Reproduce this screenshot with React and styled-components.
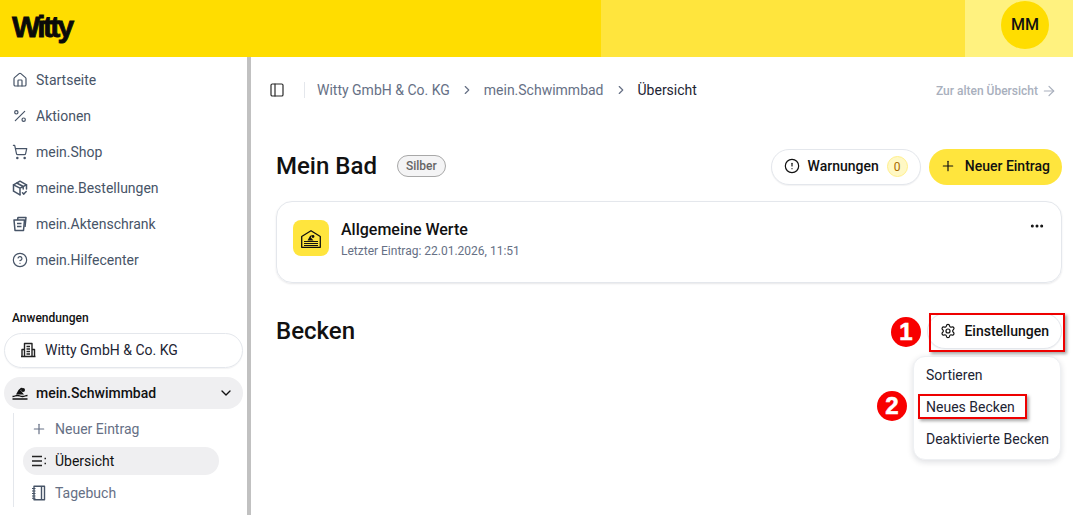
import React from "react";
import styled, { createGlobalStyle } from "styled-components";
import {
  House, Percent, ShoppingCart, CircleHelp, Plus, PanelLeft, ChevronRight, ChevronDown,
  ArrowRight, CircleAlert, Settings, Ellipsis,
} from "lucide-react";

const GlobalStyle = createGlobalStyle`
html, body { margin: 0; padding: 0; height: 515px; overflow: hidden; background: #fff; }
body { font-family: Roboto, "Liberation Sans", sans-serif; color: #111; }
* { box-sizing: border-box; }
`;

const Page = styled.div`
display: grid;
grid-template-rows: 57px 458px;
width: 1073px;
height: 515px;
overflow: hidden;
`;

const Header = styled.header`
display: grid;
grid-template-columns: 601px 364px 108px;
`;

const HeaderPart = styled.div`
background: ${(p) => p.$bg};
display: flex;
align-items: flex-start;
padding: ${(p) => p.$padding || 0};
`;

const Logo = styled.div`
font-family: "Liberation Sans", Arial, sans-serif;
font-weight: 700;
font-size: 30px;
line-height: 30px;
letter-spacing: -2.7px;
color: #0a0a0a;
-webkit-text-stroke: 0.8px #0a0a0a;
`;

const Avatar = styled.div`
width: 48px;
height: 48px;
padding-bottom: 1px;
border-radius: 50%;
background: #ffdd00;
display: flex;
align-items: center;
justify-content: center;
font-size: 16px;
font-weight: 500;
color: #111;
`;

const Body = styled.div`
display: grid;
grid-template-columns: 247px 4px 1fr;
min-height: 0;
`;

const Sidebar = styled.aside`
padding: 5px 4px 0;
overflow: hidden;
`;

const Scrollbar = styled.div`
background: #c1c1c1;
`;

const NavItem = styled.div`
display: flex;
align-items: center;
gap: 8px;
height: 36px;
padding-left: 8px;
font-size: 14px;
color: #475467;
svg { flex: none; }
`;

const SectionLabel = styled.div`
margin: 32px 0 7px 8px;
height: 16px;
line-height: 16px;
font-size: 12px;
font-weight: 500;
color: #111;
`;

const AppPill = styled.div`
display: flex;
align-items: center;
gap: 9px;
height: 35px;
padding: 0 0 1px 15px;
border: 1px solid #e4e7ec;
border-radius: 18px;
box-shadow: 0 1px 1px rgba(16, 24, 40, 0.05);
font-size: 14px;
color: #1d2433;
`;

const ActiveApp = styled.div`
display: flex;
align-items: center;
gap: 8px;
height: 32px;
margin-top: 9px;
padding: 0 9px 1px 8px;
border-radius: 16px;
background: #efeff1;
font-size: 14px;
font-weight: 500;
color: #111;
span { flex: 1; }
`;

const SubNav = styled.div`
margin: 4px 0 0 9px;
padding: 2px 0 0 9px;
border-left: 1px solid #e4e7ec;
`;

const SubItem = styled.div`
display: flex;
align-items: center;
gap: 8px;
height: 28px;
width: 196px;
margin-bottom: 4px;
padding: 0 0 1px 8px;
border-radius: 14px;
font-size: 14px;
color: ${(p) => (p.$active ? "#111" : "#667085")};
background: ${(p) => (p.$active ? "#efeff1" : "transparent")};
svg { flex: none; color: ${(p) => (p.$active ? "#222" : "#667085")}; }
`;

const Main = styled.main`
position: relative;
padding: 0 11px 0 25px;
`;

const TopBar = styled.div`
display: flex;
align-items: center;
height: 66px;
margin-left: -7px;
font-size: 14px;
color: #667085;
`;

const Divider = styled.div`
width: 1px;
height: 16px;
margin: 0 12px 0 19px;
background: #e4e7ec;
`;

const Crumb = styled.span`
color: ${(p) => (p.$current ? "#1d2433" : "#667085")};
`;

const CrumbSep = styled(ChevronRight)`
margin: 0 10px;
color: #667085;
`;

const OldLink = styled.div`
margin-left: auto;
margin-right: 5px;
padding-top: 1px;
display: flex;
align-items: center;
gap: 3px;
font-size: 12px;
font-weight: 500;
color: #a9b0bd;
`;

const TitleRow = styled.div`
display: flex;
align-items: center;
height: 36px;
margin-top: 26px;
`;

const Title = styled.h1`
margin: 0 0 ${(p) => p.$lift || 0}px;
font-size: 24px;
line-height: 32px;
font-weight: 500;
color: #111;
`;

const Badge = styled.span`
margin: 0 0 2px 20px;
padding: 0 8px;
height: 22px;
line-height: 20px;
border: 1px solid #a8a8a8;
border-radius: 11px;
background: #f4f4f5;
font-size: 12px;
font-weight: 500;
color: #666;
`;

const Actions = styled.div`
margin-left: auto;
display: flex;
gap: 8px;
`;

const Button = styled.div`
display: flex;
align-items: center;
height: 36px;
border-radius: 18px;
font-size: 14px;
font-weight: 500;
line-height: 16px;
color: #111;
border: ${(p) => (p.$yellow ? "none" : "1px solid #e4e7ec")};
background: ${(p) => (p.$yellow ? "#ffe53d" : "#fff")};
box-shadow: ${(p) => (p.$yellow ? "none" : "0 1px 1px rgba(16, 24, 40, 0.05)")};
gap: ${(p) => p.$gap || 8}px;
padding: ${(p) => p.$padding};
`;

const Count = styled.span`
width: 21px;
height: 21px;
margin-top: 1px;
border-radius: 50%;
background: #fff8c4;
border: 1px solid #ffef8a;
display: flex;
align-items: center;
justify-content: center;
font-size: 12px;
font-weight: 400;
color: #a86a00;
`;

const Card = styled.div`
display: flex;
height: 82px;
margin-top: 16px;
padding: 18px 16px;
border: 1px solid #e4e7ec;
border-radius: 16px;
box-shadow: 0 1px 2px rgba(16, 24, 40, 0.1);
`;

const CardIcon = styled.div`
width: 36px;
height: 36px;
padding-top: 2px;
border-radius: 8px;
background: #ffe53d;
display: flex;
align-items: center;
justify-content: center;
`;

const CardText = styled.div`
margin-left: 12px;
flex: 1;
`;

const CardTitle = styled.div`
font-size: 16px;
line-height: 20px;
font-weight: 500;
color: #111;
`;

const CardSub = styled.div`
margin-top: 3px;
font-size: 12px;
line-height: 16px;
color: #667085;
`;

const CardMenu = styled(Ellipsis)`
margin: -2px 0 0 0;
color: #111;
`;

const SectionRow = styled.div`
display: flex;
align-items: center;
justify-content: space-between;
height: 36px;
margin-top: 30px;
`;

const Dropdown = styled.div`
position: absolute;
top: 299px;
right: 12px;
width: 148px;
height: 104px;
padding: 2px 0;
border: 1px solid #eef0f3;
border-radius: 12px;
background: #fff;
box-shadow: 0 2px 6px rgba(16, 24, 40, 0.14);
`;

const DropItem = styled.div`
height: 32px;
line-height: 32px;
padding-left: 12px;
font-size: 14px;
color: #1d2433;
`;

/* red marks laid over the screenshot */
const RedBox = styled.div`
position: absolute;
top: ${(p) => p.$top}px;
left: ${(p) => p.$left}px;
width: ${(p) => p.$w}px;
height: ${(p) => p.$h}px;
border: 2.5px solid #ee0000;
box-shadow: 2px 2px 3px rgba(0, 0, 0, 0.35);
`;

const RedDot = styled.div`
position: absolute;
top: ${(p) => p.$top}px;
left: ${(p) => p.$left}px;
width: 30px;
height: 30px;
border-radius: 50%;
background: #f80000;
display: flex;
align-items: center;
justify-content: center;
font-family: "Liberation Sans", Arial, sans-serif;
font-size: 24px;
font-weight: 700;
color: #fff;
-webkit-text-stroke: 0.6px #fff;
`;

const Cabinet = () => (
  <svg width="16" height="16" viewBox="0 0 16 16" fill="none" stroke="currentColor" strokeWidth="1.5" strokeLinejoin="round">
    <path d="M2 4h10.500l-1 10.500H3z" />
    <path d="M5.500 4 6 1.500h8L13 11" />
    <path d="M5 7.500h4.500M5 10.500h4.500" />
  </svg>
);

const Parcel = () => (
  <svg width="16" height="16" viewBox="0 0 16 16" fill="none" stroke="currentColor" strokeWidth="1.5" strokeLinejoin="round" strokeLinecap="round">
    <path d="M14.500 9V4.800L8 1.200 1.500 4.800v6.400L8 14.800" />
    <path d="M1.500 4.800 8 8.200l6.500-3.400M8 8.200v6.600M4.800 3l6.400 3.500v2.500" />
    <path d="m10.500 12.800 1.300 1.300 2.400-2.600" />
  </svg>
);

const Office = () => (
  <svg width="16" height="16" viewBox="0 0 16 16" fill="none" stroke="#222" strokeWidth="1.400" strokeLinejoin="round">
    <path d="M4.500 14.500V1.500h7.500v13M2 14.500V7.500h2.500M12 7.500h2.500v7M1 14.500h14.500" />
    <path d="M6.500 4.500h3.500M6.500 7h3.500M6.500 9.500h3.500M6.500 12h3.500" />
  </svg>
);

const Swimmer = ({ size = 16 }) => (
  <svg width={size} height={size} viewBox="0 0 16 16" fill="none">
    <circle cx="11" cy="5" r="2" fill="#111" />
    <path d="M4 9.500 6.500 5 9 2.800l2 .2-2.600 2.300 3.600 4.200z" fill="#111" />
    <path d="M.5 11.500c2.500 0 2.500-1 5-1s2.500 1 5 1 2.500-1 5-1M.5 14h15" stroke="#111" strokeWidth="1.300" />
  </svg>
);

const ListMark = () => (
  <svg width="16" height="16" viewBox="0 0 16 16" fill="none" stroke="#222" strokeWidth="1.600" strokeLinecap="butt">
    <path d="M1 3.500h10M1 8h10M1 12.500h10M13.500 5.500h1.500M13.500 10.500h1.500" />
  </svg>
);

const Diary = () => (
  <svg width="16" height="16" viewBox="0 0 16 16" fill="none" stroke="#475467" strokeWidth="1.400" strokeLinejoin="round">
    <path d="M3 1.200h10.500v13.600H3zM10.500 1.200v13.600" />
    <path d="M1 3.500h3.500M1 6h3.500M1 8.500h3.500M1 11h3.500M1 13.300h3.500" strokeWidth="1.100" />
  </svg>
);

const PoolHouse = () => (
  <svg width="20" height="18" viewBox="0 0 20 18" fill="none" stroke="#111" strokeWidth="1.300" strokeLinejoin="round">
    <path d="M.7 6.500 10 .7l9.300 5.800v10.800H.7z" />
    <circle cx="12" cy="6.500" r="1.400" fill="#111" stroke="none" />
    <path d="M6.500 10.500 9 6l2-1.200-1.200 2.700 2.700 3z" fill="#111" stroke="none" />
    <path d="M3 11.500h14M3 13.500h14M3 15.500h14" strokeWidth="1.100" />
  </svg>
);

const mainNav = [
  ["Startseite", <House key="a" size={16} strokeWidth={1.8} />],
  ["Aktionen", <Percent key="b" size={16} strokeWidth={1.8} />],
  ["mein.Shop", <ShoppingCart key="c" size={16} strokeWidth={1.8} />],
  ["meine.Bestellungen", <Parcel key="d" />],
  ["mein.Aktenschrank", <Cabinet key="e" />],
  ["mein.Hilfecenter", <CircleHelp key="f" size={16} strokeWidth={1.8} />],
];

const App = () => {
  return (
    <Page>
      <GlobalStyle />
      <Header>
        <HeaderPart $bg="#ffdd00" $padding="12px 0 0 12px"><Logo>Witty</Logo></HeaderPart>
        <HeaderPart $bg="#ffe53d" />
        <HeaderPart $bg="#fff27f" $padding="1px 0 0 36px"><Avatar>MM</Avatar></HeaderPart>
      </Header>
      <Body>
        <Sidebar>
          {mainNav.map(([label, icon]) => (
            <NavItem key={label}>{icon}{label}</NavItem>
          ))}
          <SectionLabel>Anwendungen</SectionLabel>
          <AppPill><Office />Witty GmbH &amp; Co. KG</AppPill>
          <ActiveApp>
            <Swimmer />
            <span>mein.Schwimmbad</span>
            <ChevronDown size={16} strokeWidth={2} />
          </ActiveApp>
          <SubNav>
            <SubItem><Plus size={16} strokeWidth={1.8} />Neuer Eintrag</SubItem>
            <SubItem $active><ListMark />Übersicht</SubItem>
            <SubItem><Diary />Tagebuch</SubItem>
          </SubNav>
        </Sidebar>
        <Scrollbar />
        <Main>
          <TopBar>
            <PanelLeft size={16} strokeWidth={1.8} color="#2a2a2a" />
            <Divider />
            <Crumb>Witty GmbH &amp; Co. KG</Crumb>
            <CrumbSep size={14} />
            <Crumb>mein.Schwimmbad</Crumb>
            <CrumbSep size={14} />
            <Crumb $current>Übersicht</Crumb>
            <OldLink>Zur alten Übersicht <ArrowRight size={16} strokeWidth={1.8} /></OldLink>
          </TopBar>
          <TitleRow>
            <Title $lift={2}>Mein Bad</Title>
            <Badge>Silber</Badge>
            <Actions>
              <Button $padding="0 12px 2px 12px">
                <CircleAlert size={16} strokeWidth={1.8} />
                Warnungen
                <Count>0</Count>
              </Button>
              <Button $yellow $padding="0 12px 2px 11px" $gap={9}>
                <Plus size={16} strokeWidth={1.8} />
                Neuer Eintrag
              </Button>
            </Actions>
          </TitleRow>
          <Card>
            <CardIcon><PoolHouse /></CardIcon>
            <CardText>
              <CardTitle>Allgemeine Werte</CardTitle>
              <CardSub>Letzter Eintrag: 22.01.2026, 11:51</CardSub>
            </CardText>
            <CardMenu size={16} strokeWidth={2.500} />
          </Card>
          <SectionRow>
            <Title>Becken</Title>
            <Button $padding="0 12px 0 12px">
              <Settings size={16} strokeWidth={1.8} />
              Einstellungen
            </Button>
          </SectionRow>
          <Dropdown>
            <DropItem>Sortieren</DropItem>
            <DropItem>Neues Becken</DropItem>
            <DropItem>Deaktivierte Becken</DropItem>
          </Dropdown>
          <RedBox $top={256} $left={678} $w={136} $h={39} />
          <RedBox $top={337} $left={667} $w={109} $h={25} />
          <RedDot $top={260} $left={640}>1</RedDot>
          <RedDot $top={334} $left={626}>2</RedDot>
        </Main>
      </Body>
    </Page>
  );
};

export default App;
